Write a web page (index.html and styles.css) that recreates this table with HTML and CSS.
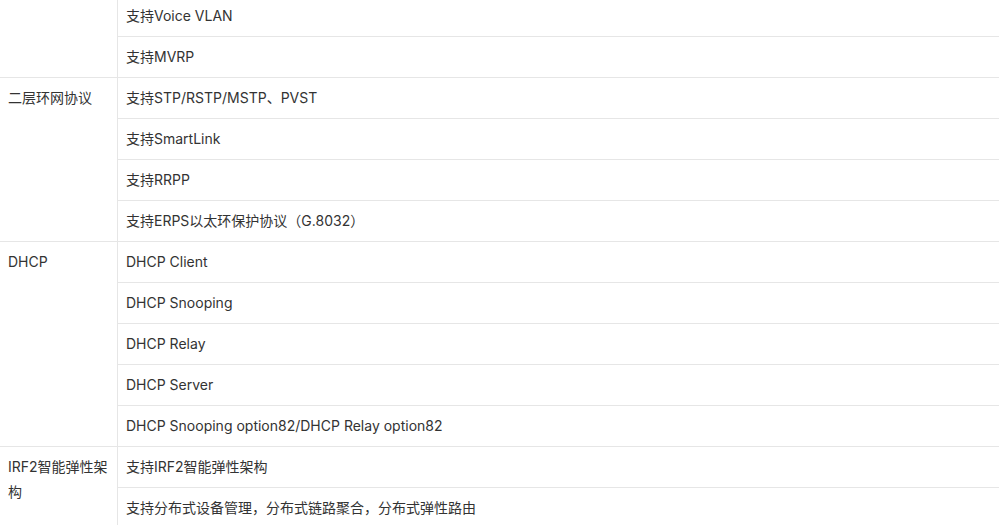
FILE: index.html
```html
<!DOCTYPE html>
<html lang="zh-CN">
<head>
    <meta charset="UTF-8">
    <title>功能特性</title>
    <link rel="stylesheet" href="styles.css">
</head>
<body>
    <table class="spec-table">
        <tr>
            <td class="group" rowspan="2"></td>
            <td>支持Voice VLAN</td>
        </tr>
        <tr>
            <td>支持MVRP</td>
        </tr>
        <tr>
            <td class="group" rowspan="4">二层环网协议</td>
            <td>支持STP/RSTP/MSTP、PVST</td>
        </tr>
        <tr>
            <td>支持SmartLink</td>
        </tr>
        <tr>
            <td>支持RRPP</td>
        </tr>
        <tr>
            <td>支持ERPS以太环保护协议（G.8032）</td>
        </tr>
        <tr>
            <td class="group" rowspan="5">DHCP</td>
            <td>DHCP Client</td>
        </tr>
        <tr>
            <td>DHCP Snooping</td>
        </tr>
        <tr>
            <td>DHCP Relay</td>
        </tr>
        <tr>
            <td>DHCP Server</td>
        </tr>
        <tr>
            <td>DHCP Snooping option82/DHCP Relay option82</td>
        </tr>
        <tr>
            <td class="group" rowspan="2">IRF2智能弹性架构</td>
            <td>支持IRF2智能弹性架构</td>
        </tr>
        <tr>
            <td>支持分布式设备管理，分布式链路聚合，分布式弹性路由</td>
        </tr>
    </table>
</body>
</html>
```

FILE: styles.css
```css
body {
    margin: 0;
    padding: 0;
    background: #fff;
    font-family: Inter, "Noto Sans CJK SC", sans-serif;
    font-size: 14px;
    color: #333;
}
.spec-table {
    width: 100%;
    margin-top: -4px;
    border-collapse: separate;
    border-spacing: 0;
}
.spec-table td {
    box-sizing: border-box;
    padding: 8px;
    line-height: 24px;
    border-bottom: 1px solid #e6e6e6;
    vertical-align: middle;
    text-align: left;
}
.spec-table td.group {
    width: 118px;
    border-right: 1px solid #e6e6e6;
    vertical-align: top;
    line-height: 25px;
    padding-top: 7px;
}
```
